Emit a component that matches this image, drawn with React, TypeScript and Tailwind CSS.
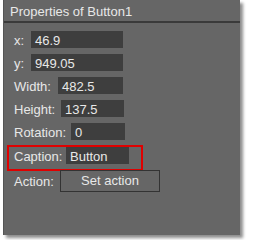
import React from 'react'

const font = { fontFamily: '"Liberation Sans", Arial, sans-serif' }

function Field({ label, labelW, value, inputW }: { label: string; labelW: string; value: string; inputW: string }) {
  return (
    <div className="flex items-start h-[17px]">
      <span className={`${labelW} leading-[17px] pt-[1px]`}>{label}</span>
      <div className={`${inputW} h-[17px] bg-[#3e3e3e] pl-[4px] leading-[17px] pt-[1px]`}>{value}</div>
    </div>
  )
}

export default function App() {
  return (
    <div className="w-[253px] h-[240px] bg-white pl-[3px]" style={font}>
      <div className="w-[237px] h-[235px] bg-[#666666] border-l border-[#555555] shadow-[3px_3px_3px_rgba(0,0,0,0.45)] text-[13px] text-[#e8e8e8]">
        {/* Title */}
        <div className="h-[23px] border-b-2 border-[#3a3a3a] pl-[6px] pt-[3px] leading-[18px]">
          Properties of Button1
        </div>

        {/* Fields */}
        <div className="flex flex-col pt-[8px] pl-[3px]">
          <div className="flex flex-col gap-[6px] pl-[7px]">
            <Field label="x:" labelW="w-[17px]" value="46.9" inputW="w-[92px]" />
            <Field label="y:" labelW="w-[17px]" value="949.05" inputW="w-[92px]" />
            <Field label="Width:" labelW="w-[44px]" value="482.5" inputW="w-[65px]" />
            <Field label="Height:" labelW="w-[47px]" value="137.5" inputW="w-[63px]" />
            <Field label="Rotation:" labelW="w-[57px]" value="0" inputW="w-[54px]" />
          </div>

          <div className="mt-[5px] w-[136px] h-[26px] border-2 border-[#e00000] pl-[5px]">
            <Field label="Caption:" labelW="w-[52px]" value="Button" inputW="w-[63px]" />
          </div>

          <div className="flex items-start -mt-px pl-[7px]">
            <span className="w-[46px] leading-[17px] pt-[3px]">Action:</span>
            <button className="w-[100px] h-[22px] border border-[#333333] bg-[#666666] text-[#e8e8e8] leading-[20px]">
              Set action
            </button>
          </div>
        </div>
      </div>
    </div>
  )
}
